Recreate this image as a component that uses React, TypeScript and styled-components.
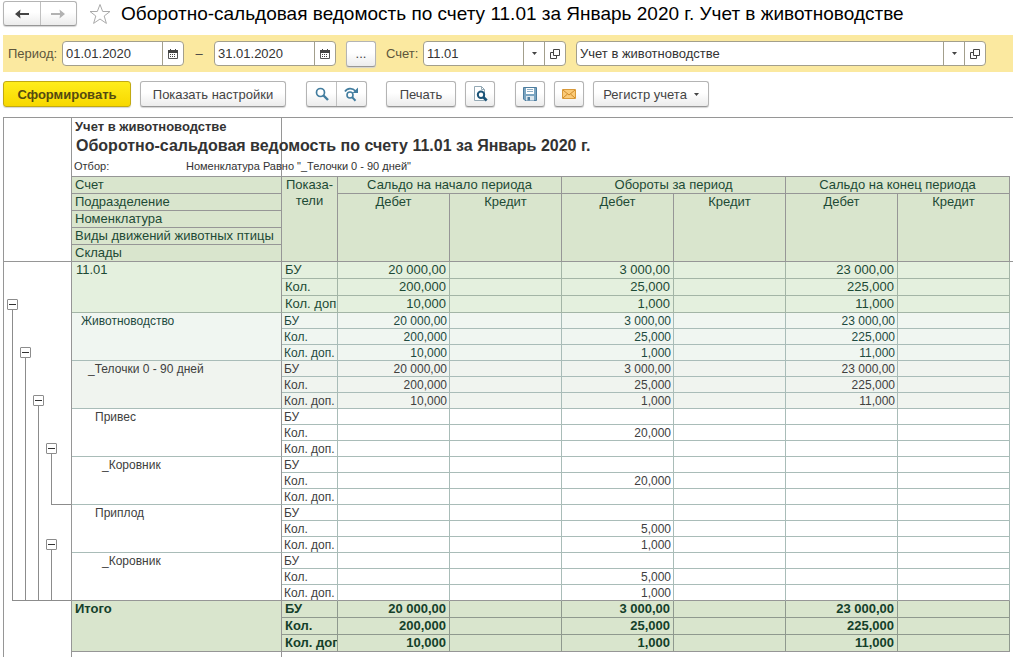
import React from "react";
import styled, { createGlobalStyle, css } from "styled-components";

const GlobalStyle = createGlobalStyle`
  *, *::before, *::after { box-sizing: border-box; }
  body { margin: 0; background: #fff; }
  body, button, input { font-family: "Liberation Sans", Arial, sans-serif; font-size: 13px; color: #444; }
`;

const line = "#969696";

const Page = styled.main`
  display: flex;
  flex-direction: column;
  min-height: 100vh;
  padding-left: 3px;
`;

const TitleBar = styled.header`
  display: flex;
  align-items: center;
  height: 27px;
  margin-bottom: 8px;
`;

const raised = css`
  border: 1px solid #b4b4b4;
  border-bottom-color: #979797;
  border-radius: 3px;
  background: linear-gradient(#fff 45%, #ececec);
  box-shadow: 0 1px 1px #d4d4d4;
`;

const ButtonPair = styled.div<{ $gap?: number; $width: number; $height: number }>`
  ${raised}
  display: flex;
  flex: none;
  width: ${(p) => p.$width}px;
  height: ${(p) => p.$height}px;
  margin-left: ${(p) => p.$gap ?? 0}px;
`;

const PairButton = styled.button`
  display: flex;
  flex: 1;
  align-items: center;
  justify-content: center;
  padding: 0;
  border: 0;
  background: none;
  & + & {
    border-left: 1px solid #c0c0c0;
  }
`;

const StarButton = styled.button`
  display: flex;
  padding: 0;
  border: 0;
  background: none;
  margin: 0 9px 0 11px;
`;

const PageTitle = styled.h1`
  margin: 0;
  font-size: 19px;
  font-weight: 400;
  line-height: 24px;
  color: #000;
  white-space: nowrap;
`;

const FilterBar = styled.form`
  display: flex;
  align-items: center;
  height: 37px;
  padding: 0 27px 0 5px;
  background: #fbe9a0;
`;

const FieldLabel = styled.label`
  width: 54px;
  color: #5d563c;
`;

const AccountLabel = styled(FieldLabel)`
  width: 37px;
  margin-left: 10px;
`;

const FieldBox = styled.div<{ $width?: number; $gap?: number }>`
  display: flex;
  ${(p) => (p.$width ? `width: ${p.$width}px; flex: none;` : "flex: 1; min-width: 0;")}
  height: 25px;
  margin-left: ${(p) => p.$gap ?? 0}px;
  border: 1px solid #a39f8c;
  border-radius: 4px;
  background: #fff;
  overflow: hidden;
`;

const TextInput = styled.input`
  flex: 1;
  min-width: 0;
  padding: 0 3px;
  border: 0;
  outline: 0;
  background: none;
  color: #333;
`;

const FieldButton = styled.button`
  display: flex;
  align-items: center;
  justify-content: center;
  width: 21px;
  padding: 0;
  border: 0;
  border-left: 1px solid #a39f8c;
  background: none;
`;

const Dash = styled.span`
  width: 30px;
  text-align: center;
`;

const ToolBar = styled.div`
  display: flex;
  align-items: center;
  padding: 9px 0 10px;
`;

const ToolButton = styled.button<{ $width: number; $gap?: number; $primary?: boolean }>`
  ${raised}
  display: flex;
  flex: none;
  align-items: center;
  justify-content: center;
  gap: 7px;
  width: ${(p) => p.$width}px;
  height: 26px;
  margin-left: ${(p) => p.$gap ?? 0}px;
  padding: 0;
  white-space: nowrap;
  ${(p) =>
    p.$primary &&
    css`
      border-color: #c2aa12;
      background: linear-gradient(#ffed1c, #f7d800);
      color: #544a10;
      font-weight: 700;
    `}
`;

const Sheet = styled.section`
  display: flex;
  flex: 1;
  border-top: 1px solid ${line};
  border-left: 1px solid ${line};
`;

const Gutter = styled.div`
  flex: none;
  width: 67px;
`;

const GutterHead = styled.div`
  height: 144px;
  border-bottom: 1px solid ${line};
`;

const Tree = styled.div`
  display: grid;
  grid-template-columns: 13px 13px 13px 1fr;
  grid-template-rows: 51px repeat(6, 48px);
  padding-left: 3px;
`;

const Branch = styled.div<{ $level: number; $from: number; $to: number }>`
  grid-column: ${(p) => p.$level} / -1;
  grid-row: ${(p) => p.$from} / ${(p) => p.$to};
  display: flex;
  flex-direction: column;
  padding-top: ${(p) => (p.$from === 1 ? 37 : 34)}px;
  pointer-events: none;
`;

const Toggle = styled.button`
  display: flex;
  flex: none;
  align-items: center;
  justify-content: center;
  width: 11px;
  height: 11px;
  padding: 0;
  border: 1px solid #8c8c8c;
  border-radius: 1px;
  background: #fff;
  pointer-events: auto;
  &::before {
    content: "";
    width: 7px;
    height: 1px;
    background: #333;
  }
`;

const BranchLine = styled.div`
  flex: 1;
  margin-left: 5px;
  border-left: 1px solid #8c8c8c;
  border-bottom: 1px solid #8c8c8c;
`;

const Report = styled.div`
  display: flex;
  flex: 1;
  flex-direction: column;
  min-width: 0;
`;

const Caption = styled.div`
  width: 211px;
  height: 58px;
  border-left: 1px solid ${line};
  border-right: 1px solid ${line};
  white-space: nowrap;
  color: #333;
`;

const Organisation = styled.div`
  padding-left: 3px;
  font-weight: 700;
  line-height: 18px;
`;

const ReportTitle = styled.h2`
  margin: 0;
  padding-left: 4px;
  font-size: 16px;
  line-height: 20px;
`;

const Selection = styled.div`
  display: grid;
  grid-template-columns: 112px auto;
  padding-left: 2px;
  font-size: 11px;
  line-height: 20px;
`;

const Blank = styled.div`
  flex: 1;
  width: 211px;
  border-left: 1px solid ${line};
  border-right: 1px solid ${line};
`;

const Table = styled.table`
  width: calc(100% - 3px);
  table-layout: fixed;
  border-collapse: separate;
  border-spacing: 0;
  border-top: 1px solid ${line};
  border-left: 1px solid ${line};
`;

const Col = styled.col<{ $width?: number }>`
  ${(p) => p.$width && `width: ${p.$width}px;`}
`;

const HeadCell = styled.th<{ $left?: boolean }>`
  height: 17px;
  padding: 0 3px;
  border-right: 1px solid ${line};
  border-bottom: 1px solid ${line};
  background: #d9e5cd;
  color: #1d4a35;
  font-size: 13px;
  font-weight: 400;
  line-height: 16px;
  text-align: ${(p) => (p.$left ? "left" : "center")};
  vertical-align: top;
  white-space: nowrap;
`;

const EdgeHeadCell = styled(HeadCell)`
  position: relative;
  &::after {
    content: "";
    position: absolute;
    left: 100%;
    bottom: -1px;
    width: 4px;
    height: 1px;
    background: ${line};
  }
`;

type Tone = "account" | "division" | "item" | "plain" | "total";

const tones: Record<Tone, { bg: string; ink: string; rule: string }> = {
  account: { bg: "#e4f0de", ink: "#1d4a35", rule: "#a3b5a6" },
  division: { bg: "#f0f6f1", ink: "#1d4a40", rule: "#a9bcb8" },
  item: { bg: "#f0f4ef", ink: "#40403e", rule: "#a9bcb8" },
  plain: { bg: "#ffffff", ink: "#404040", rule: "#a9bcb8" },
  total: { bg: "#d9e5cd", ink: "#14402a", rule: "#8f998e" },
};

const isLarge = (tone: Tone) => tone === "account" || tone === "total";

const bodyCell = css<{ $tone: Tone; $closes?: boolean }>`
  height: ${(p) => (isLarge(p.$tone) ? 17 : 16)}px;
  border-right: 1px solid ${(p) => tones[p.$tone].rule};
  border-bottom: 1px solid ${(p) => (p.$closes ? line : tones[p.$tone].rule)};
  background: ${(p) => tones[p.$tone].bg};
  color: ${(p) => tones[p.$tone].ink};
  font-size: ${(p) => (isLarge(p.$tone) ? 13 : 12)}px;
  font-weight: ${(p) => (p.$tone === "total" ? 700 : 400)};
  line-height: ${(p) => (isLarge(p.$tone) ? 16 : 14)}px;
  vertical-align: top;
  white-space: nowrap;
  overflow: hidden;
`;

const topPad = (tone: Tone) => (isLarge(tone) ? 0 : 1);

const NameCell = styled.th<{ $tone: Tone; $closes?: boolean; $indent: number }>`
  ${bodyCell}
  padding: ${(p) => topPad(p.$tone)}px 0 0 ${(p) => p.$indent}px;
  border-right-color: ${line};
  text-align: left;
`;

const MeasureCell = styled.th<{ $tone: Tone; $closes?: boolean }>`
  ${bodyCell}
  padding: ${(p) => topPad(p.$tone)}px 0 0 ${(p) => (isLarge(p.$tone) ? 3 : 2)}px;
  text-align: left;
`;

const ValueCell = styled.td<{ $tone: Tone; $closes?: boolean }>`
  ${bodyCell}
  padding: ${(p) => topPad(p.$tone)}px ${(p) => (isLarge(p.$tone) ? 3 : 2)}px 0 0;
  text-align: right;
`;

const ArrowIcon = ({ back }: { back?: boolean }) => (
  <svg width="14" height="10" viewBox="0 0 14 10" fill={back ? "#444" : "#b2b2b2"}>
    <path d={back ? "M0 5l5.500-4.500L5 4h9v2H5l.5 3.500z" : "M14 5L8.500.5 9 4H0v2h9l-.5 3.500z"} />
  </svg>
);

const StarIcon = () => (
  <svg width="24" height="22" viewBox="0 0 24 22" fill="#fff" stroke="#aaa">
    <path d="M12 1.5l2.700 7H22l-5.800 4.500 2.200 7.400L12 16l-6.400 4.400 2.200-7.400L2 8.500h7.300z" />
  </svg>
);

const CalendarIcon = () => (
  <svg width="10" height="10" viewBox="0 0 10 10">
    <path d="M.5 2.500h9v7h-9z" fill="#fff" stroke="#555" />
    <path d="M0 1h10v3H0zM2 0h1v1H2zM7 0h1v1H7z" fill="#444" />
    <path d="M2 5.500h6M2 7.500h6" stroke="#444" strokeDasharray="1 1" />
  </svg>
);

const CaretIcon = () => (
  <svg width="5" height="3" viewBox="0 0 5 3">
    <path d="M0 0h5L2.500 3z" fill="#444" />
  </svg>
);

const OpenIcon = () => (
  <svg width="10" height="10" viewBox="0 0 10 10" fill="none" stroke="#444">
    <path d="M3.500.5h6v6h-6zM3 3.500H.5v6h6V7" />
  </svg>
);

const SearchIcon = () => (
  <svg width="14" height="14" viewBox="0 0 14 14" fill="none" stroke="#427d9f">
    <circle cx="5.500" cy="5.500" r="4" strokeWidth="1.700" />
    <path d="M8.500 8.500l4.500 4.500" strokeWidth="2.400" />
  </svg>
);

const SearchNextIcon = () => (
  <svg width="15" height="15" viewBox="0 0 15 15" fill="none" stroke="#427d9f">
    <path d="M1 4.500C3 .8 8.500.5 11.500 4" strokeWidth="1.700" />
    <path d="M14 .5v5.500H8.500z" fill="#427d9f" stroke="none" />
    <circle cx="6" cy="8" r="3" strokeWidth="1.600" />
    <path d="M8.200 10.300l3.300 3.500" strokeWidth="2" />
  </svg>
);

const PreviewIcon = () => (
  <svg width="15" height="16" viewBox="0 0 15 16" fill="none">
    <path d="M1.500.5h7l3 3v11h-10z" fill="#fff" stroke="#94a9b5" />
    <path d="M8.500.5v3h3" stroke="#94a9b5" />
    <circle cx="8" cy="8.800" r="3.200" fill="#fff" stroke="#1c5478" strokeWidth="2" />
    <path d="M10.200 11l3.500 3.500" stroke="#1c5478" strokeWidth="2.600" />
  </svg>
);

const SaveIcon = () => (
  <svg width="14" height="14" viewBox="0 0 14 14">
    <path d="M.5.5h13v13H2L.5 12z" fill="#7ba5c1" stroke="#4d7d9f" />
    <path d="M3 1h8v6H3z" fill="#fff" />
    <path d="M4 2.500h6M4 4.500h6" stroke="#8fb0c6" />
    <path d="M3 9h8v4.500H3z" fill="#dce7ee" />
    <path d="M4.500 10H7v3.500H4.500z" fill="#4d7d9f" />
  </svg>
);

const MailIcon = () => (
  <svg width="14" height="10" viewBox="0 0 14 10">
    <path d="M.5.5h13v9H.5z" fill="#fbcb78" stroke="#d99a3a" />
    <path d="M1 1l6 5 6-5M1 9l4.500-4M13 9L8.500 5" fill="none" stroke="#cf8a2a" />
  </svg>
);

const measures = ["БУ", "Кол.", "Кол. доп."];
const none = ["", "", ""];
const opening = ["20 000,00", "200,000", "10,000"];
const turnover = ["3 000,00", "25,000", "1,000"];
const closing = ["23 000,00", "225,000", "11,000"];

interface Group {
  name: string;
  tone: Tone;
  indent: number;
  debits: string[][];
}

const groups: Group[] = [
  { name: "11.01", tone: "account", indent: 4, debits: [opening, turnover, closing] },
  { name: "Животноводство", tone: "division", indent: 9, debits: [opening, turnover, closing] },
  { name: "_Телочки 0 - 90 дней", tone: "item", indent: 16, debits: [opening, turnover, closing] },
  { name: "Привес", tone: "plain", indent: 23, debits: [none, ["", "20,000", ""], none] },
  { name: "_Коровник", tone: "plain", indent: 30, debits: [none, ["", "20,000", ""], none] },
  { name: "Приплод", tone: "plain", indent: 23, debits: [none, ["", "5,000", "1,000"], none] },
  { name: "_Коровник", tone: "plain", indent: 30, debits: [none, ["", "5,000", "1,000"], none] },
  { name: "Итого", tone: "total", indent: 3, debits: [opening, turnover, closing] },
];

const branches = [
  { level: 1, from: 1, to: 8 },
  { level: 2, from: 2, to: 8 },
  { level: 3, from: 3, to: 8 },
  { level: 4, from: 4, to: 6 },
  { level: 4, from: 6, to: 8 },
];

const periods = ["Сальдо на начало периода", "Обороты за период", "Сальдо на конец периода"];

const GroupRows = ({ group, last }: { group: Group; last: boolean }) => (
  <tbody>
    {measures.map((measure, i) => {
      const closes = last && i === 2;
      return (
        <tr key={measure}>
          {i === 0 && (
            <NameCell scope="rowgroup" rowSpan={3} $tone={group.tone} $indent={group.indent} $closes={last}>
              {group.name}
            </NameCell>
          )}
          <MeasureCell scope="row" $tone={group.tone} $closes={closes}>
            {measure}
          </MeasureCell>
          {group.debits.map((values, k) => (
            <React.Fragment key={k}>
              <ValueCell $tone={group.tone} $closes={closes}>{values[i]}</ValueCell>
              <ValueCell $tone={group.tone} $closes={closes} />
            </React.Fragment>
          ))}
        </tr>
      );
    })}
  </tbody>
);

const DateField = ({ id, value, label, width }: { id: string; value: string; label?: string; width: number }) => (
  <FieldBox $width={width}>
    <TextInput id={id} defaultValue={value} aria-label={label} />
    <FieldButton type="button" aria-label="Выбрать дату"><CalendarIcon /></FieldButton>
  </FieldBox>
);

const LookupField = ({ id, value, label, width, gap }: { id: string; value: string; label?: string; width?: number; gap?: number }) => (
  <FieldBox $width={width} $gap={gap}>
    <TextInput id={id} defaultValue={value} aria-label={label} />
    <FieldButton type="button" aria-label="Показать список"><CaretIcon /></FieldButton>
    <FieldButton type="button" aria-label="Открыть"><OpenIcon /></FieldButton>
  </FieldBox>
);

export default function App() {
  return (
    <Page>
      <GlobalStyle />
      <TitleBar>
        <ButtonPair $width={74} $height={25}>
          <PairButton aria-label="Назад"><ArrowIcon back /></PairButton>
          <PairButton aria-label="Вперед"><ArrowIcon /></PairButton>
        </ButtonPair>
        <StarButton aria-label="В избранное"><StarIcon /></StarButton>
        <PageTitle>Оборотно-сальдовая ведомость по счету 11.01 за Январь 2020 г. Учет в животноводстве</PageTitle>
      </TitleBar>

      <FilterBar>
        <FieldLabel htmlFor="from">Период:</FieldLabel>
        <DateField id="from" value="01.01.2020" width={122} />
        <Dash>–</Dash>
        <DateField id="to" value="31.01.2020" label="Конец периода" width={122} />
        <ToolButton type="button" $width={30} $gap={10}>...</ToolButton>
        <AccountLabel htmlFor="account">Счет:</AccountLabel>
        <LookupField id="account" value="11.01" width={143} />
        <LookupField id="organisation" value="Учет в животноводстве" label="Организация" gap={10} />
      </FilterBar>

      <ToolBar>
        <ToolButton $width={128} $primary>Сформировать</ToolButton>
        <ToolButton $width={146} $gap={9}>Показать настройки</ToolButton>
        <ButtonPair $gap={20} $width={61} $height={26}>
          <PairButton aria-label="Найти"><SearchIcon /></PairButton>
          <PairButton aria-label="Найти далее"><SearchNextIcon /></PairButton>
        </ButtonPair>
        <ToolButton $width={70} $gap={19}>Печать</ToolButton>
        <ToolButton $width={30} $gap={9} aria-label="Предварительный просмотр"><PreviewIcon /></ToolButton>
        <ToolButton $width={30} $gap={20} aria-label="Сохранить"><SaveIcon /></ToolButton>
        <ToolButton $width={30} $gap={9} aria-label="Отправить по почте"><MailIcon /></ToolButton>
        <ToolButton $width={116} $gap={9}>Регистр учета <CaretIcon /></ToolButton>
      </ToolBar>

      <Sheet>
        <Gutter>
          <GutterHead />
          <Tree>
            {branches.map((b) => (
              <Branch key={`${b.level}-${b.from}`} $level={b.level} $from={b.from} $to={b.to}>
                <Toggle aria-label="Свернуть" />
                <BranchLine />
              </Branch>
            ))}
          </Tree>
        </Gutter>
        <Report>
          <Caption>
            <Organisation>Учет в животноводстве</Organisation>
            <ReportTitle>Оборотно-сальдовая ведомость по счету 11.01 за Январь 2020 г.</ReportTitle>
            <Selection>
              <span>Отбор:</span>
              <span>Номенклатура Равно "_Телочки 0 - 90 дней"</span>
            </Selection>
          </Caption>
          <Table>
            <colgroup>
              <Col $width={210} />
              <Col $width={56} />
              <Col span={6} />
            </colgroup>
            <thead>
              <tr>
                <HeadCell scope="col" $left>Счет</HeadCell>
                <HeadCell scope="col" rowSpan={5}>Показа-<br />тели</HeadCell>
                {periods.map((p) => (
                  <HeadCell key={p} scope="colgroup" colSpan={2}>{p}</HeadCell>
                ))}
              </tr>
              <tr>
                <HeadCell scope="col" $left>Подразделение</HeadCell>
                <HeadCell scope="col" rowSpan={4}>Дебет</HeadCell>
                <HeadCell scope="col" rowSpan={4}>Кредит</HeadCell>
                <HeadCell scope="col" rowSpan={4}>Дебет</HeadCell>
                <HeadCell scope="col" rowSpan={4}>Кредит</HeadCell>
                <HeadCell scope="col" rowSpan={4}>Дебет</HeadCell>
                <EdgeHeadCell scope="col" rowSpan={4}>Кредит</EdgeHeadCell>
              </tr>
              {["Номенклатура", "Виды движений животных птицы", "Склады"].map((name) => (
                <tr key={name}>
                  <HeadCell scope="col" $left>{name}</HeadCell>
                </tr>
              ))}
            </thead>
            {groups.map((group, i) => (
              <GroupRows key={i} group={group} last={i >= groups.length - 2} />
            ))}
          </Table>
          <Blank />
        </Report>
      </Sheet>
    </Page>
  );
}
